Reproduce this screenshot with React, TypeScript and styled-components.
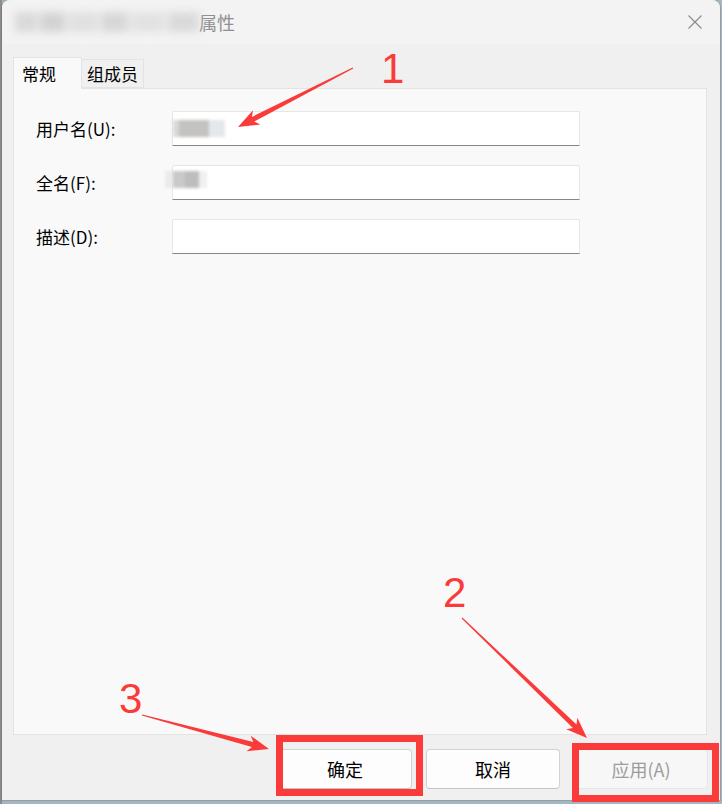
import React from "react";
import styled, { createGlobalStyle } from "styled-components";

const GlobalStyle = createGlobalStyle`
  html, body {
    margin: 0;
    padding: 0;
    width: 722px;
    height: 804px;
    overflow: hidden;
    background: #9aa6ae;
  }
  body {
    font-family: "Noto Sans CJK SC", "Microsoft YaHei", sans-serif;
  }
`;

const Desktop = styled.div`
  position: relative;
  width: 722px;
  height: 804px;
  box-sizing: border-box;
  padding: 0 2px 4px 2px;
  background: linear-gradient(to right, #8c8c8c 0 2px, #a4b6c1 2px);
`;

const Window = styled.div`
  height: 100%;
  display: flex;
  flex-direction: column;
  background: #f0f0f0;
  border-radius: 8px 8px 0 0;
  overflow: hidden;
  box-shadow: 0 0 0 1px rgba(0, 0, 0, 0.12);
`;

const TitleBar = styled.div`
  height: 44px;
  flex-shrink: 0;
  display: flex;
  align-items: center;
  background: #f3f3f3;
  padding: 0 18px 0 13px;
`;

const BlurredName = styled.div`
  display: flex;
  gap: 3px;
  width: 184px;
  height: 20px;
  filter: blur(4px);
  opacity: 0.9;
`;

const Smudge = styled.span<{ w: number; shade: string }>`
  width: ${(p) => p.w}px;
  height: 100%;
  background: ${(p) => p.shade};
`;

const TitleText = styled.span`
  font-size: 18px;
  color: #8f8f8f;
`;

const CloseBtn = styled.div`
  margin-left: auto;
  width: 14px;
  height: 14px;
  display: flex;
`;

const Main = styled.div`
  flex: 1;
  display: flex;
  flex-direction: column;
  padding: 13px 13px 0 11px;
  min-height: 0;
`;

const TabStrip = styled.div`
  display: flex;
  align-items: flex-end;
  height: 31px;
  flex-shrink: 0;
`;

const Tab = styled.div<{ active?: boolean; w: number; pl: number }>`
  position: relative;
  z-index: ${(p) => (p.active ? 2 : 1)};
  box-sizing: border-box;
  width: ${(p) => p.w}px;
  height: ${(p) => (p.active ? 32 : 29)}px;
  padding-left: ${(p) => p.pl}px;
  display: flex;
  align-items: center;
  font-size: 17px;
  color: #000;
  background: ${(p) => (p.active ? "#f9f9f9" : "#f0f0f0")};
  border: 1px solid #e3e3e3;
  border-bottom: ${(p) => (p.active ? "none" : "1px solid #e3e3e3")};
  border-left: ${(p) => (p.active ? "1px solid #e3e3e3" : "none")};
  margin-bottom: ${(p) => (p.active ? "-1px" : "0")};
`;

const Panel = styled.div`
  flex: 1;
  background: #f9f9f9;
  border: 1px solid #e3e3e3;
`;

const Form = styled.div`
  display: grid;
  grid-template-columns: 136px 408px;
  row-gap: 19px;
  padding: 22px 0 0 22px;
`;

const Label = styled.label`
  align-self: center;
  font-size: 17px;
  color: #000;
`;

const Field = styled.div`
  position: relative;
  height: 35px;
  box-sizing: border-box;
  background: #fff;
  border: 1px solid #e6e6e6;
  border-bottom: 1px solid #868686;
  border-radius: 2px 2px 0 0;
`;

const FieldBlur = styled.div<{ left: number; top: number }>`
  position: absolute;
  left: ${(p) => p.left}px;
  top: ${(p) => p.top}px;
  display: flex;
  height: 17px;
  filter: blur(1.5px);
`;

const ButtonRow = styled.div`
  display: flex;
  justify-content: flex-end;
  gap: 14px;
  padding: 14px 12px 11px 0;
  flex-shrink: 0;
`;

const Button = styled.button<{ disabled?: boolean }>`
  width: 134px;
  height: 40px;
  box-sizing: border-box;
  border-radius: 4px;
  border: 1px solid ${(p) => (p.disabled ? "#e6e6e6" : "#d2d2d2")};
  border-bottom-color: ${(p) => (p.disabled ? "#e6e6e6" : "#c4c4c4")};
  background: ${(p) => (p.disabled ? "#f7f7f7" : "#fdfdfd")};
  color: ${(p) => (p.disabled ? "#9c9c9c" : "#000")};
  font-family: "Noto Sans CJK SC", "Microsoft YaHei", sans-serif;
  font-size: 18px;
  padding: 0;
`;

/* annotations lying over the dialog */
const Overlay = styled.svg`
  position: absolute;
  left: 0;
  top: 0;
  pointer-events: none;
`;

const Step = styled.span<{ x: number; y: number }>`
  position: absolute;
  left: ${(p) => p.x}px;
  top: ${(p) => p.y}px;
  font-family: "Liberation Sans", Arial, sans-serif;
  font-size: 42px;
  line-height: 1;
  color: #fb3a3a;
`;

const Highlight = styled.div<{ x: number; y: number; w: number; h: number }>`
  position: absolute;
  left: ${(p) => p.x}px;
  top: ${(p) => p.y}px;
  width: ${(p) => p.w}px;
  height: ${(p) => p.h}px;
  box-sizing: border-box;
  border: 7px solid #fb3a3a;
`;

function arrowPoints(x1: number, y1: number, x2: number, y2: number) {
  const dx = x2 - x1;
  const dy = y2 - y1;
  const len = Math.hypot(dx, dy);
  const ux = dx / len;
  const uy = dy / len;
  const px = -uy;
  const py = ux;
  const headLen = 21;
  const headW = 8;
  const neckW = 2.6;
  const tailW = 0.6;
  const hx = x2 - ux * headLen;
  const hy = y2 - uy * headLen;
  const nx = x2 - ux * (headLen - 4);
  const ny = y2 - uy * (headLen - 4);
  const pts = [
    [x1 + px * tailW, y1 + py * tailW],
    [nx + px * neckW, ny + py * neckW],
    [hx + px * headW, hy + py * headW],
    [x2, y2],
    [hx - px * headW, hy - py * headW],
    [nx - px * neckW, ny - py * neckW],
    [x1 - px * tailW, y1 - py * tailW],
  ];
  return pts.map((p) => p[0].toFixed(1) + "," + p[1].toFixed(1)).join(" ");
}

const arrows = [
  { x1: 353, y1: 68, x2: 238, y2: 127 },
  { x1: 462, y1: 618, x2: 587, y2: 738 },
  { x1: 142, y1: 715, x2: 269, y2: 749 },
];

const fields = [
  { label: "用户名(U):", blur: { left: 0, top: 8, parts: [["#d9d9d9", 6], ["#c4c3c1", 30], ["#e3e8ec", 16]] } },
  { label: "全名(F):", blur: { left: -8, top: 5, parts: [["#ebebeb", 8], ["#c9c9c9", 12], ["#bdbdbd", 14], ["#f0f0f0", 8]] } },
  { label: "描述(D):", blur: null },
];

function App() {
  return (
    <Desktop>
      <GlobalStyle />
      <Window>
        <TitleBar>
          <BlurredName>
            <Smudge w={22} shade="#d6d6d6" />
            <Smudge w={26} shade="#cfcfcf" />
            <Smudge w={30} shade="#dedede" />
            <Smudge w={28} shade="#d4d4d4" />
            <Smudge w={34} shade="#e0e0e0" />
            <Smudge w={32} shade="#d7d7d7" />
          </BlurredName>
          <TitleText>属性</TitleText>
          <CloseBtn>
            <svg width="14" height="14" viewBox="0 0 14 14">
              <path d="M0.5 0.5 L13.5 13.5 M13.5 0.5 L0.5 13.5" stroke="#8a8a8a" strokeWidth="1.1" fill="none" />
            </svg>
          </CloseBtn>
        </TitleBar>

        <Main>
          <TabStrip>
            <Tab active w={69} pl={8}>常规</Tab>
            <Tab w={62} pl={5}>组成员</Tab>
          </TabStrip>
          <Panel>
            <Form>
              {fields.map((f) => (
                <React.Fragment key={f.label}>
                  <Label>{f.label}</Label>
                  <Field>
                    {f.blur && (
                      <FieldBlur left={f.blur.left} top={f.blur.top}>
                        {f.blur.parts.map(([shade, w], i) => (
                          <Smudge key={i} w={w as number} shade={shade as string} />
                        ))}
                      </FieldBlur>
                    )}
                  </Field>
                </React.Fragment>
              ))}
            </Form>
          </Panel>
        </Main>

        <ButtonRow>
          <Button>确定</Button>
          <Button>取消</Button>
          <Button disabled>应用(A)</Button>
        </ButtonRow>
      </Window>

      <Overlay width="722" height="804">
        {arrows.map((a, i) => (
          <polygon key={i} points={arrowPoints(a.x1, a.y1, a.x2, a.y2)} fill="#fb3a3a" />
        ))}
      </Overlay>
      <Step x={381} y={48}>1</Step>
      <Step x={443} y={572}>2</Step>
      <Step x={119} y={678}>3</Step>
      <Highlight x={276} y={735} w={147} h={61} />
      <Highlight x={572} y={743} w={147} h={59} />
    </Desktop>
  );
}

export default App;
